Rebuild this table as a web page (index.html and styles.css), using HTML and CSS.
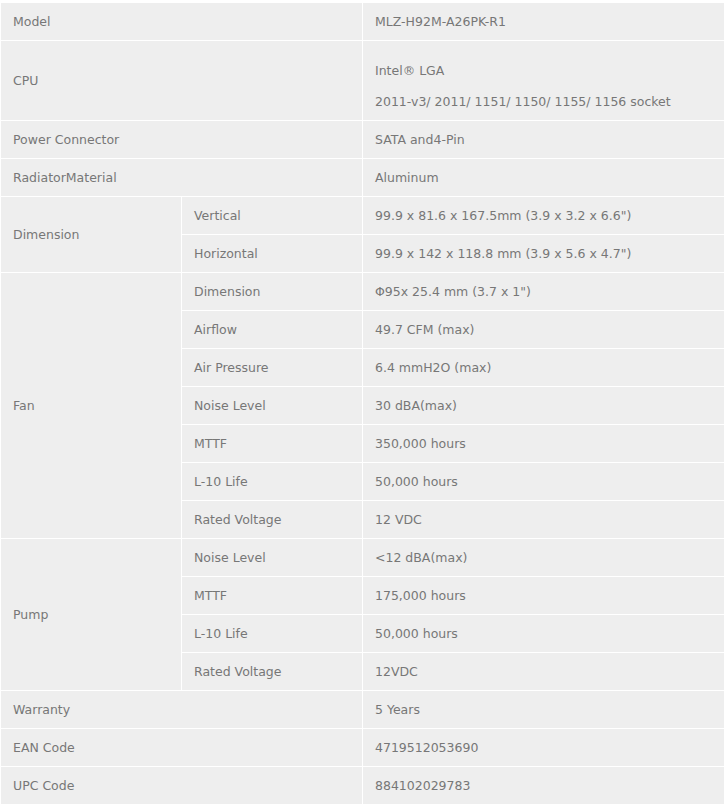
FILE: index.html
```html
<!DOCTYPE html>
<html>
<head>
<meta charset="utf-8">
<link rel="stylesheet" href="styles.css">
</head>
<body>
<table class="spec">
  <colgroup><col class="c1"><col class="c2"><col class="c3"></colgroup>
  <tr><td colspan="2">Model</td><td>MLZ-H92M-A26PK-R1</td></tr>
  <tr class="tall"><td colspan="2">CPU</td><td class="multi"><p>Intel® LGA</p><p>2011-v3/ 2011/ 1151/ 1150/ 1155/ 1156 socket</p></td></tr>
  <tr><td colspan="2">Power Connector</td><td>SATA and4-Pin</td></tr>
  <tr><td colspan="2">RadiatorMaterial</td><td>Aluminum</td></tr>
  <tr><td rowspan="2">Dimension</td><td>Vertical</td><td>99.9 x 81.6 x 167.5mm (3.9 x 3.2 x 6.6")</td></tr>
  <tr><td>Horizontal</td><td>99.9 x 142 x 118.8 mm (3.9 x 5.6 x 4.7")</td></tr>
  <tr><td rowspan="7">Fan</td><td>Dimension</td><td>Φ95x 25.4 mm (3.7 x 1")</td></tr>
  <tr><td>Airflow</td><td>49.7 CFM (max)</td></tr>
  <tr><td>Air Pressure</td><td>6.4 mmH2O (max)</td></tr>
  <tr><td>Noise Level</td><td>30 dBA(max)</td></tr>
  <tr><td>MTTF</td><td>350,000 hours</td></tr>
  <tr><td>L-10 Life</td><td>50,000 hours</td></tr>
  <tr><td>Rated Voltage</td><td>12 VDC</td></tr>
  <tr><td rowspan="4">Pump</td><td>Noise Level</td><td>&lt;12 dBA(max)</td></tr>
  <tr><td>MTTF</td><td>175,000 hours</td></tr>
  <tr><td>L-10 Life</td><td>50,000 hours</td></tr>
  <tr><td>Rated Voltage</td><td>12VDC</td></tr>
  <tr><td colspan="2">Warranty</td><td>5 Years</td></tr>
  <tr><td colspan="2">EAN Code</td><td>4719512053690</td></tr>
  <tr><td colspan="2">UPC Code</td><td>884102029783</td></tr>
</table>
</body>
</html>
```
FILE: styles.css
```css
html, body {
  margin: 0;
  padding: 0;
  background: #fff;
}
body {
  padding-top: 2px;
}
.spec {
  width: 724px;
  border-collapse: collapse;
  table-layout: fixed;
  font-family: "DejaVu Sans", Verdana, sans-serif;
  font-size: 12.5px;
  color: #777;
}
.c1 { width: 181px; }
.c2 { width: 181px; }
.c3 { width: 362px; }
.spec td {
  background: #eeeeee;
  border: 1px solid #fff;
  height: 38px;
  padding: 0 12px;
  vertical-align: middle;
  box-sizing: border-box;
  line-height: 16px;
}
.spec p {
  margin: 0;
  line-height: 31px;
}
.tall td {
  height: 80px;
}
.spec td.multi {
  padding-top: 10px;
}
```
